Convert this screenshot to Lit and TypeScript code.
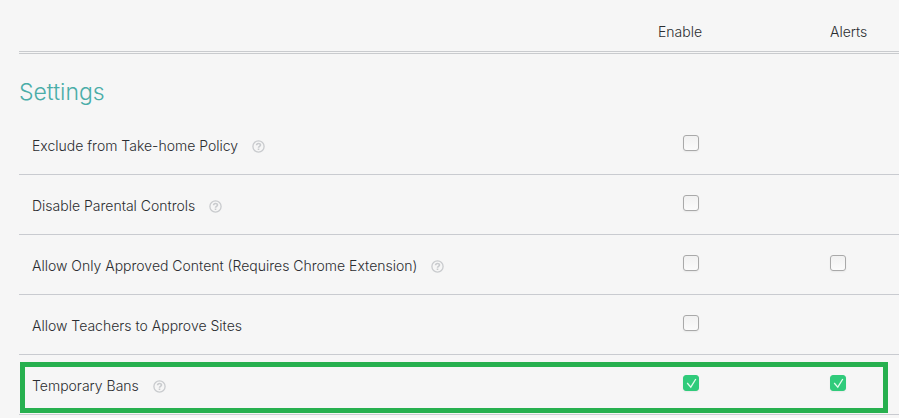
import { LitElement, html, css, svg, nothing } from "lit";
import { customElement, property } from "lit/decorators.js";

interface Setting {
  id: string;
  label: string;
  help: boolean;
  enable: boolean;
  alerts?: boolean;
  highlighted?: boolean;
}

const SETTINGS: Setting[] = [
  { id: "take-home", label: "Exclude from Take-home Policy", help: true, enable: false },
  { id: "parental", label: "Disable Parental Controls", help: true, enable: false },
  { id: "approved", label: "Allow Only Approved Content (Requires Chrome Extension)", help: true, enable: false, alerts: false },
  { id: "teachers", label: "Allow Teachers to Approve Sites", help: false, enable: false },
  { id: "bans", label: "Temporary Bans", help: true, enable: true, alerts: true, highlighted: true },
];

@customElement("tick-box")
export class TickBox extends LitElement {
  @property({ type: Boolean }) checked = false;
  @property() label = "";

  static styles = css`
    :host { display: inline-grid; vertical-align: top; }
    .box, .mark { grid-area: 1 / 1; }
    .box {
      appearance: none;
      box-sizing: border-box;
      width: 16px;
      height: 16px;
      margin: 0;
      border: 1px solid #a9a9a9;
      border-radius: 3px;
      background: linear-gradient(#f1f1f1, #fbfbfb);
      box-shadow: 0 1px 2px rgba(0, 0, 0, 0.06);
    }
    .box:checked { border-color: #30cb7b; background: #30cb7b; }
    .mark { width: 16px; height: 16px; pointer-events: none; visibility: hidden; }
    .box:checked + .mark { visibility: visible; }
  `;

  render() {
    return html`
      <input class="box" type="checkbox" aria-label=${this.label} .checked=${this.checked} />
      <svg class="mark" viewBox="0 0 16 16" fill="none" aria-hidden="true">
        <path d="M4.2 8 7.8 12.2 12.8 4" stroke="#e4fbee" stroke-width="1.3" />
      </svg>
    `;
  }
}

const helpGlyph = svg`
  <circle cx="6.5" cy="6.5" r="5.6" stroke-width="1.3" />
  <path d="M4.6 5.2C4.6 3 8.5 3 8.5 5 8.5 6.3 6.5 6.3 6.5 7.7M6.5 8.6V10" stroke-width="1.6" />
`;

@customElement("app-root")
export class AppRoot extends LitElement {
  static styles = css`
    :host {
      display: block;
      min-height: 100vh;
      box-sizing: border-box;
      padding-left: 19px;
      background: #f6f6f6;
      color: #2b2d30;
      font: 300 14px/20px Inter, "Liberation Sans", sans-serif;
    }
    .settings { width: 100%; table-layout: fixed; border-collapse: separate; border-spacing: 0; }
    .col-enable { width: 172px; }
    .col-alerts { width: 69px; }
    th, td { box-sizing: border-box; padding: 0; text-align: left; font-weight: 300; }
    .head { height: 54px; padding: 22px 0 9px; vertical-align: top; border-bottom: 3px double #c9cbce; }
    .section { height: 61px; padding-top: 23px; vertical-align: top; }
    .title { margin: 0; color: #4aada8; font-size: 23px; line-height: 30px; font-weight: 300; }
    .row { position: relative; }
    .cell { height: 60px; padding-top: 20px; vertical-align: top; border-bottom: 1px solid #c9cbd0; }
    .name { padding-top: 21px; padding-left: 13px; }
    .enable { padding-left: 25px; }
    .entry { display: flex; align-items: center; gap: 14px; }
    .help { display: flex; padding: 0; border: 0; background: none; }
    .help-icon { width: 13px; height: 13px; fill: none; stroke: #c9cbce; }
    .frame {
      position: absolute;
      top: 7px;
      right: 11px;
      bottom: 2px;
      left: 1px;
      border: 5px solid #27b04f;
      pointer-events: none;
    }
  `;

  private renderRow(s: Setting) {
    return html`
      <tr class="row">
        <th class="cell name" scope="row">
          <div class="entry">
            <span>${s.label}</span>
            ${s.help
              ? html`<button class="help" type="button" aria-label=${`Help: ${s.label}`}>
                  <svg class="help-icon" viewBox="0 0 13 13" aria-hidden="true">${helpGlyph}</svg>
                </button>`
              : nothing}
          </div>
          ${s.highlighted ? html`<div class="frame"></div>` : nothing}
        </th>
        <td class="cell enable">
          <tick-box label=${`Enable ${s.label}`} ?checked=${s.enable}></tick-box>
        </td>
        <td class="cell">
          ${s.alerts === undefined
            ? nothing
            : html`<tick-box label=${`Alerts for ${s.label}`} ?checked=${s.alerts}></tick-box>`}
        </td>
      </tr>
    `;
  }

  render() {
    return html`
      <table class="settings">
        <colgroup>
          <col />
          <col class="col-enable" />
          <col class="col-alerts" />
        </colgroup>
        <thead>
          <tr>
            <td class="head"></td>
            <th class="head" scope="col">Enable</th>
            <th class="head" scope="col">Alerts</th>
          </tr>
        </thead>
        <tbody>
          <tr>
            <th class="section" colspan="3" scope="rowgroup"><h2 class="title">Settings</h2></th>
          </tr>
          ${SETTINGS.map((s) => this.renderRow(s))}
        </tbody>
      </table>
    `;
  }
}
